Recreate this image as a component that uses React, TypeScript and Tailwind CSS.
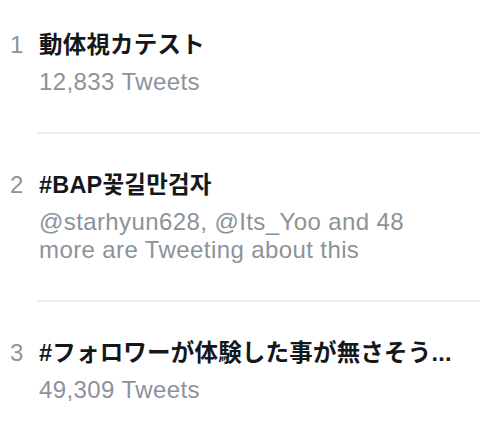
const trends = [
  { rank: 1, title: "動体視カテスト", lines: ["12,833 Tweets"] },
  {
    rank: 2,
    title: "#BAP꽃길만검자",
    lines: ["@starhyun628, @Its_Yoo and 48", "more are Tweeting about this"],
  },
  { rank: 3, title: "#フォロワーが体験した事が無さそう...", lines: ["49,309 Tweets"] },
]

const sans = "font-['Liberation_Sans','Noto_Sans_CJK_JP','Noto_Sans_CJK_KR',sans-serif]"

function TrendRow({ rank, title, lines, first, last }: { rank: number; title: string; lines: string[]; first: boolean; last: boolean }) {
  return (
    <div>
      <div className={first ? "flex pt-[30px] pb-[36px]" : "flex pt-[36px] pb-[36px]"}>
        {/* rank number */}
        <div className={`w-[39px] pl-[10px] text-[24px] leading-[30px] text-[#8d959c] ${sans}`}>{rank}</div>
        <div className="flex-1 min-w-0">
          <div className={`text-[23.5px] leading-[30px] font-bold tracking-[0.2px] text-[#15181b] whitespace-nowrap ${sans}`}>
            {title}
          </div>
          <div className="mt-[8px]">
            {lines.map((l) => (
              <div key={l} className={`text-[24px] leading-[28px] tracking-[0.4px] text-[#8b939a] whitespace-nowrap ${sans}`}>
                {l}
              </div>
            ))}
          </div>
        </div>
      </div>
      {!last && <div className="ml-[37px] h-[2px] bg-[#ececec]" />}
    </div>
  )
}

export default function App() {
  return (
    <div className="w-[480px] h-[426px] bg-white overflow-hidden">
      {trends.map((t, i) => (
        <TrendRow key={t.rank} {...t} first={i === 0} last={i === trends.length - 1} />
      ))}
    </div>
  )
}
